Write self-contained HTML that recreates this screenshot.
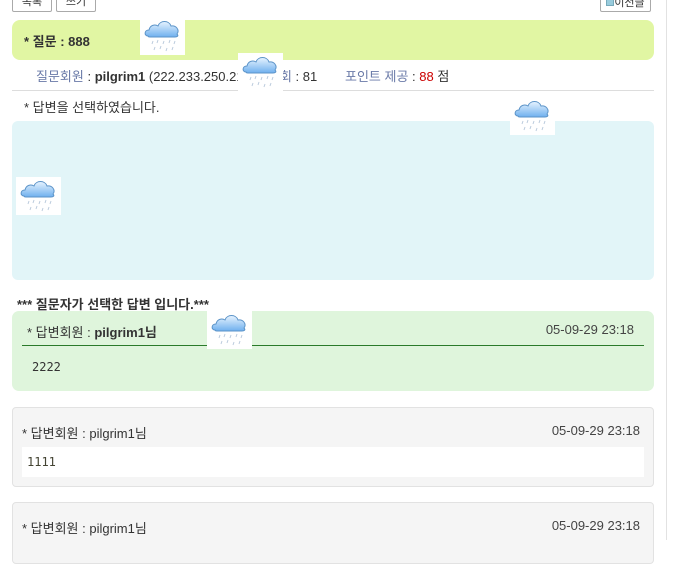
<!DOCTYPE html>
<html><head><meta charset="utf-8"><style>
body{margin:0;width:679px;height:540px;background:#fff;position:relative;overflow:hidden;font-family:"Liberation Sans","Noto Sans CJK KR",sans-serif;font-size:13px;color:#333}
.a{position:absolute;white-space:nowrap}
.btn{position:absolute;border:1px solid #aaa;background:#fff;font-size:11px;text-align:center;border-radius:2px}
.ic{position:absolute;width:45px;height:38px;background:#fff}
.dt{position:absolute;right:39px;font-size:13px;color:#444}
</style></head><body>
<div class="a" style="left:666px;top:0;width:1px;height:540px;background:#e2e2e2"></div>
<div class="btn" style="left:12px;top:-6px;width:38px;height:16px;line-height:14px">목록</div>
<div class="btn" style="left:56px;top:-6px;width:38px;height:16px;line-height:14px">쓰기</div>
<div class="btn" style="left:600px;top:-6px;width:49px;height:16px;line-height:16px;font-size:11px"><span style="display:inline-block;width:6px;height:7px;background:#9cd;border:1px solid #7ab"></span>이전글</div>

<div class="a" style="left:12px;top:20px;width:642px;height:40px;background:#e1f6a3;border-radius:8px"></div>
<div class="a" style="left:24px;top:31px;font-weight:bold;font-size:13px">* 질문 : 888</div>
<div class="a" style="left:36px;top:66px"><span style="color:#6a7aa8">질문회원</span> : <b>pilgrim1</b> (222.233.250.21)</div>
<div class="a" style="left:268px;top:66px"><span style="color:#6a7aa8">조회</span> : 81</div>
<div class="a" style="left:345px;top:66px"><span style="color:#6a7aa8">포인트 제공</span> : <span style="color:#c00">88</span> 점</div>
<div class="a" style="left:12px;top:90px;width:642px;height:1px;background:#ddd"></div>
<div class="a" style="left:24px;top:97px">* 답변을 선택하였습니다.</div>
<div class="a" style="left:12px;top:121px;width:642px;height:159px;background:#e2f5f8;border-radius:6px"></div>

<div class="a" style="left:17px;top:294px;font-weight:bold;font-size:13px">*** 질문자가 선택한 답변 입니다.***</div>
<div class="a" style="left:12px;top:311px;width:642px;height:80px;background:#dff5dc;border-radius:7px"></div>
<div class="a" style="left:27px;top:322px">* 답변회원 : <b>pilgrim1님</b></div>
<div class="dt" style="top:322px;right:45px">05-09-29 23:18</div>
<div class="a" style="left:22px;top:345px;width:622px;height:1px;background:#2a7a2a"></div>
<div class="a" style="left:32px;top:360px;font-family:'DejaVu Sans Mono',monospace;font-size:12px">2222</div>

<div class="a" style="left:12px;top:407px;width:640px;height:78px;background:#f5f5f5;border:1px solid #e2e2e2;border-radius:4px"></div>
<div class="a" style="left:22px;top:423px">* 답변회원 : pilgrim1님</div>
<div class="dt" style="top:423px">05-09-29 23:18</div>
<div class="a" style="left:22px;top:447px;width:622px;height:30px;background:#fff"></div>
<div class="a" style="left:27px;top:455px;font-family:'DejaVu Sans Mono',monospace;font-size:12px;color:#443">1111</div>

<div class="a" style="left:12px;top:502px;width:640px;height:60px;background:#f5f5f5;border:1px solid #e2e2e2;border-radius:4px"></div>
<div class="a" style="left:22px;top:518px">* 답변회원 : pilgrim1님</div>
<div class="dt" style="top:518px">05-09-29 23:18</div>

<svg width="0" height="0" style="position:absolute"><defs>
<linearGradient id="g" x1="0" y1="0" x2="0" y2="1"><stop offset="0" stop-color="#e8f4ff"/><stop offset="1" stop-color="#6fb0ee"/></linearGradient>
<symbol id="c" viewBox="0 0 45 38"><path d="M8 19 C4 19 4 13 9 13 C10 8 15 7 18 9 C20 3 29 3 31 9 C36 8 40 13 37 17 C39 19 37 20 35 20 L10 20 C8 20 8 19 8 19Z" fill="url(#g)" stroke="#5b93c8" stroke-width="1"/><g stroke="#bcd" stroke-width="1"><path d="M13 24l-1 3M18 23l-1 3M24 24l-1 3M30 23l-1 3M35 24l-1 3M15 30l-1 3M21 29l-1 3M27 31l-1 3M33 30l-1 3"/></g></symbol></defs></svg>
<svg class="ic" style="left:140px;top:17px"><use href="#c"/></svg>
<svg class="ic" style="left:238px;top:53px"><use href="#c"/></svg>
<svg class="ic" style="left:510px;top:97px"><use href="#c"/></svg>
<svg class="ic" style="left:16px;top:177px"><use href="#c"/></svg>
<svg class="ic" style="left:207px;top:311px"><use href="#c"/></svg>
</body></html>
